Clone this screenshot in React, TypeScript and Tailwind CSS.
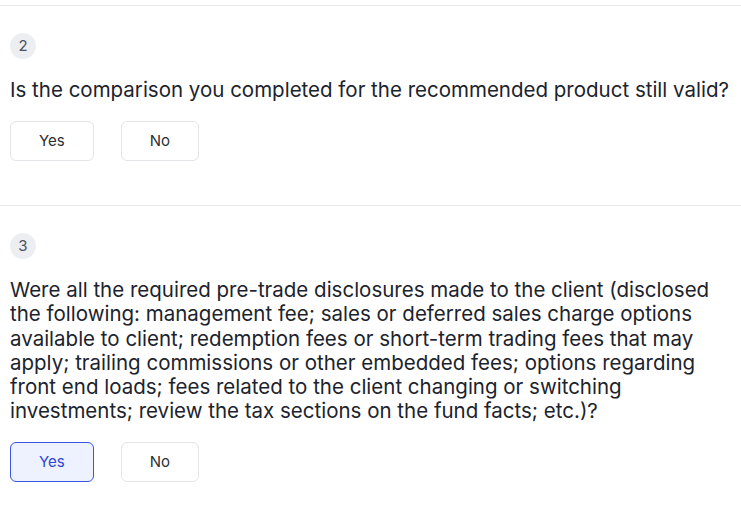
const questions = [
  {
    n: 2,
    text: "Is the comparison you completed for the recommended product still valid?",
    answer: null as null | "yes" | "no",
  },
  {
    n: 3,
    text: "Were all the required pre-trade disclosures made to the client (disclosed the following: management fee; sales or deferred sales charge options available to client; redemption fees or short-term trading fees that may apply; trailing commissions or other embedded fees; options regarding front end loads; fees related to the client changing or switching investments; review the tax sections on the fund facts; etc.)?",
    answer: "yes" as null | "yes" | "no",
  },
];

const OptionButton = ({ label, selected }: { label: string; selected: boolean }) => (
  <button
    className={
      selected
        ? "h-[40px] px-7 rounded-md border border-[#3b55e6] bg-[#eef1fe] text-[15px] text-[#2f47d6]"
        : "h-[40px] px-7 rounded-md border border-[#e3e5e8] bg-white text-[15px] text-[#2b3038]"
    }
  >
    {label}
  </button>
);

export default function App() {
  return (
    <div className="min-h-screen bg-white pt-[5px] font-['Inter',sans-serif] text-[#1c232d]">
      {questions.map((q) => (
        <section key={q.n} className="border-t border-[#ebecef] px-[10px] pt-[27px] pb-[44px]">
          <div className="flex h-[26px] w-[26px] items-center justify-center rounded-full bg-[#eceef1] text-[15px] text-[#4b5260]">
            {q.n}
          </div>
          <p className="mt-[19px] text-[20.5px] leading-[24.2px]">{q.text}</p>
          <div className="mt-[19px] flex gap-[27px]">
            <OptionButton label="Yes" selected={q.answer === "yes"} />
            <OptionButton label="No" selected={q.answer === "no"} />
          </div>
        </section>
      ))}
    </div>
  );
}
